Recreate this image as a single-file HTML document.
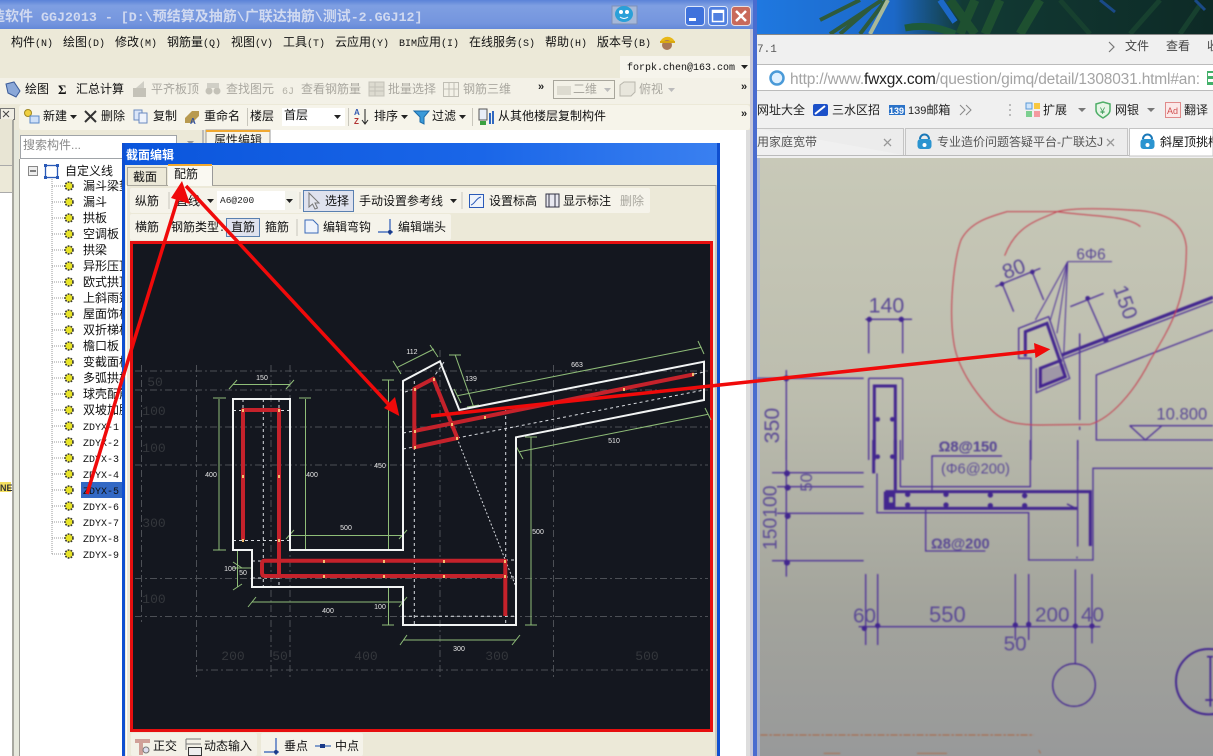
<!DOCTYPE html>
<html><head><meta charset="utf-8"><title>GGJ2013</title>
<style>
html,body{margin:0;padding:0;width:1213px;height:756px;overflow:hidden;background:#fff}
svg{display:block;font-family:"Liberation Sans","Noto Sans CJK SC",sans-serif;font-size:12px}
.l{font-family:"Liberation Mono",monospace;font-size:10px}
.g{fill:#a9a79f}
.t{font-family:"Liberation Mono","Noto Sans CJK SC",monospace;font-size:11px;fill:#111}
.gl{stroke:#4c4f55;stroke-width:1;stroke-dasharray:7 3 2 3;fill:none}
.wd{stroke:#d8dbe0;stroke-width:1;stroke-dasharray:3 3;fill:none}
.dim{stroke:#8fbd78;stroke-width:1;fill:none}
.dt{fill:#e8e8e8;font-family:"Liberation Sans",sans-serif;font-size:7px;text-anchor:middle}
.lb{fill:#34373c;font-family:"Liberation Mono",monospace;font-size:13px;text-anchor:middle}
.rb{stroke:#c5222b;stroke-width:4;fill:none;stroke-linejoin:round}
.p{fill:none;stroke:#4d3197;stroke-width:4}
.pb{fill:none;stroke:#43258f;stroke-width:9}
.pt{fill:#5a4a94;font-family:"Liberation Sans",sans-serif}
</style></head><body>
<svg width="1213" height="756" viewBox="0 0 1213 756" xmlns="http://www.w3.org/2000/svg">
<defs>
<linearGradient id="tb" x1="0" y1="0" x2="0" y2="1"><stop offset="0" stop-color="#5b82d8"/><stop offset=".2" stop-color="#7f9fe2"/><stop offset=".8" stop-color="#7495de"/><stop offset="1" stop-color="#6488d8"/></linearGradient>
<linearGradient id="dt" x1="0" y1="0" x2="1" y2="0"><stop offset="0" stop-color="#0a55dc"/><stop offset=".6" stop-color="#1a66e8"/><stop offset="1" stop-color="#3a80f0"/></linearGradient>
<linearGradient id="ph" x1="0" y1="0" x2="0" y2="1"><stop offset="0" stop-color="#c8c9b8"/><stop offset=".4" stop-color="#bcbdae"/><stop offset=".75" stop-color="#a3a49c"/><stop offset="1" stop-color="#98999a"/></linearGradient>
<linearGradient id="wall" x1="0" y1="0" x2="1" y2="0"><stop offset="0" stop-color="#1f78e0"/><stop offset=".3" stop-color="#1c68c8"/><stop offset=".45" stop-color="#123a34"/><stop offset="1" stop-color="#0d2a26"/></linearGradient>
<filter id="bl" x="-5%" y="-5%" width="110%" height="110%"><feGaussianBlur stdDeviation="0.7"/></filter>
</defs>

<!-- wallpaper -->
<rect x="757" y="0" width="456" height="35" fill="url(#wall)"/>
<g stroke-width="5" fill="none">
<path d="M830,34L882,0M860,34L886,0M820,20L860,0M840,34L870,8" stroke="#2e5a3c" stroke-width="4"/>
<path d="M870,34L888,0" stroke="#a8b898" stroke-width="4"/>
<path d="M905,28C925,24 940,28 955,34" stroke="#1e5a38" stroke-width="7"/>
<path d="M950,0L975,34M975,0L960,34M1000,0L985,34M1040,0L1020,34" stroke="#1e5030" stroke-width="9"/>
<path d="M940,0L955,22" stroke="#1c68c8" stroke-width="6"/>
<path d="M1060,0L1090,34M1130,34L1160,0M1180,34L1200,5" stroke="#17402f" stroke-width="5"/>
<path d="M1100,0L1115,12M1195,0L1205,10" stroke="#1a4a88" stroke-width="3"/>
</g>

<!-- browser chrome -->
<rect x="757" y="34" width="456" height="124" fill="#f0f0f0"/>
<rect x="757" y="34" width="456" height="1" fill="#888"/>
<text x="757" y="52" fill="#555" class="l" style="font-size:11px">7.1</text>
<path d="M1109,42l5,5l-5,5" fill="none" stroke="#777" stroke-width="1.2"/>
<text x="1125" y="50" fill="#444">文件</text><text x="1166" y="50" fill="#444">查看</text><text x="1207" y="50" fill="#444">收</text>
<rect x="757" y="65" width="456" height="26" fill="#fff"/>
<path d="M757,64.500H1213M757,90.500H1213" stroke="#bbb"/>
<circle cx="777" cy="78" r="6.500" fill="#dff0ff" stroke="#4a9ad8" stroke-width="2.500"/>
<text x="790" y="84" font-size="15.500" fill="#a4a4a4" textLength="410" font-family="Liberation Sans,sans-serif">http://www.<tspan fill="#222">fwxgx.com</tspan>/question/gimq/detail/1308031.html#an:</text>
<rect x="1207" y="71" width="6" height="14" fill="#43b06a"/><rect x="1208" y="73" width="5" height="3" fill="#fff"/><rect x="1208" y="79" width="5" height="3" fill="#fff"/>
<text x="757" y="114" fill="#222">网址大全</text>
<rect x="813" y="104" width="15" height="12" rx="2" fill="#1c50c8"/><path d="M815,114l10,-8" stroke="#fff" stroke-width="2"/>
<text x="832" y="114" fill="#222">三水区招</text>
<rect x="889" y="105" width="16" height="10" fill="#2a72c8"/><text x="889" y="114" fill="#fff" font-size="9" font-weight="bold">139</text>
<text x="908" y="114" fill="#222" font-size="12"><tspan font-size="11">139</tspan>邮箱</text>
<path d="M960,105l5,5l-5,5M966,105l5,5l-5,5" fill="none" stroke="#888"/>
<path d="M1010,104v2m0,3v2m0,3v2" stroke="#bbb" stroke-width="2"/>
<rect x="1026" y="103" width="6" height="6" fill="#cfe4fa" stroke="#5a9ad8"/><rect x="1034" y="103" width="6" height="6" fill="#f8c840"/><rect x="1026" y="111" width="6" height="6" fill="#7ccf90"/><rect x="1034" y="111" width="6" height="6" fill="#f49aa0"/>
<text x="1043" y="114" fill="#222">扩展</text><path d="M1078,108h8l-4,4z" fill="#777"/>
<path d="M1096,104l7,-2l7,2v6c0,4 -4,6 -7,8c-3,-2 -7,-4 -7,-8z" fill="#e6f5e6" stroke="#4fae68" stroke-width="1.500"/><text x="1100" y="114" font-size="9" fill="#3a9a58">¥</text>
<text x="1115" y="114" fill="#222">网银</text><path d="M1147,108h8l-4,4z" fill="#777"/>
<rect x="1165.500" y="102.500" width="15" height="15" fill="#fbe8e8" stroke="#e08a8a"/><text x="1167" y="114" font-size="9" fill="#d05050">Ad</text>
<text x="1184" y="114" fill="#222">翻译</text>
<!-- tabs -->
<rect x="757" y="128" width="456" height="30" fill="#f0f0f0"/>
<path d="M757,128.500H903.500V155M905.500,155V128.500H1127.500V155" fill="#ececec" stroke="#c4c4c4"/>
<path d="M1129.500,156V128.500H1213V156z" fill="#fff" stroke="#c4c4c4"/>
<path d="M757,155.500H1129" stroke="#bbb"/>
<text x="757" y="146" fill="#555">用家庭宽带</text>
<path d="M884,139l7,7m0,-7l-7,7M1107,139l7,7m0,-7l-7,7" stroke="#999" stroke-width="1.300"/>
<g id="ic1"><path d="M920,139a4.500,4.500 0 0 1 9,0" fill="none" stroke="#1a78b8" stroke-width="2"/><rect x="917.500" y="139" width="14" height="10" rx="3" fill="#2a94d0"/><circle cx="924.500" cy="145" r="2" fill="#fff"/></g>
<text x="937" y="146" fill="#555">专业造价问题答疑平台-广联达J</text>
<path d="M1143,139a4.500,4.500 0 0 1 9,0" fill="none" stroke="#1a78b8" stroke-width="2"/><rect x="1140.500" y="139" width="14" height="10" rx="3" fill="#2a94d0"/><circle cx="1147.500" cy="145" r="2" fill="#fff"/>
<text x="1160" y="146" fill="#111">斜屋顶挑槽</text>

<!-- photo -->
<rect x="757" y="158" width="456" height="598" fill="url(#ph)"/>
<rect x="757" y="158" width="3" height="598" fill="#a9b6e0" opacity=".7"/>
<g filter="url(#bl)">
<g transform="translate(757,160) scale(.33333)">
<path class="p" d="M335,580V480M437,580V480M325,478H465M335,655H437"/>
<circle cx="337" cy="478" r="8" fill="#43258f"/><circle cx="433" cy="478" r="8" fill="#43258f"/>
<text class="pt" x="335" y="458" font-size="64">140</text>
<path class="p" d="M88,630V900M0,655H320"/>
<circle cx="88" cy="655" r="9" fill="#43258f"/>
<text class="pt" transform="translate(66,850) rotate(-90)" font-size="64">350</text>
<path class="p" d="M335,655V900M437,655V900"/>
<path class="pb" d="M352,900V678H415V900"/><circle cx="362" cy="778" r="7" fill="#43258f"/><circle cx="406" cy="778" r="7" fill="#43258f"/><circle cx="362" cy="890" r="7" fill="#43258f"/><circle cx="406" cy="890" r="7" fill="#43258f"/>
<text class="pt" x="545" y="875" font-size="44" font-weight="bold">Ω8@150</text>
<path class="p" d="M525,888H735"/>
<path class="p" d="M822,900V595H785V505L875,470L938,655L838,698V625"/>
<path class="pb" d="M805,590V515L870,490L925,650L850,680V625L915,600"/>
<path d="M850,630L925,610L925,650L850,680Z" fill="#43258f" opacity=".25"/>
<path d="M932,305L835,480M932,305L880,480M932,305L900,520M932,305L920,590M932,305H1065" fill="none" stroke="#4d3197" stroke-width="3"/>
<text class="pt" x="958" y="298" font-size="46">6Φ6</text>
<path class="p" d="M715,380L850,325M735,370L770,455M825,335L860,420"/>
<circle cx="735" cy="372" r="7" fill="#43258f"/><circle cx="826" cy="336" r="7" fill="#43258f"/>
<text class="pt" transform="translate(745,358) rotate(-20)" font-size="62">80</text>
<path class="p" d="M940,440L1040,400M990,415L1045,540"/>
<circle cx="992" cy="415" r="7" fill="#43258f"/><circle cx="1046" cy="540" r="8" fill="#43258f"/>
<text class="pt" transform="translate(1068,385) rotate(70)" font-size="62">150</text>
<path d="M915,585L1368,412" fill="none" stroke="#43258f" stroke-width="10"/>
<path d="M920,595L1368,425" fill="none" stroke="#4d3197" stroke-width="4"/>
<path class="p" d="M968,520V780M968,800v10M962,840V900"/>
<path class="p" d="M1368,510L1018,645V840H1368"/>
<text class="pt" x="1198" y="778" font-size="50">10.800</text>
<path class="p" d="M1118,797H1368M1118,797L1165,840L1215,797"/>
<path d="M1150,200C1110,165 1000,170 900,155L750,155C700,170 640,185 612,240C590,300 575,450 590,545C600,620 650,690 690,735C730,785 770,795 850,795L1000,793C1060,775 1130,700 1180,600C1240,500 1290,420 1288,260C1280,190 1230,160 1150,152C1050,145 950,142 900,155C850,180 780,190 743,287" fill="none" stroke="#c5384a" stroke-width="3"/>
</g>
<g transform="translate(757,440) scale(.33333)">
<path class="pb" d="M350,0V100M415,0V150"/>
<path class="p" d="M88,0V410M45,98H320M60,140H320M60,220H320M45,362H320M360,100V218H815V360H1008V85H1368"/>
<circle cx="90" cy="100" r="9" fill="#43258f"/><circle cx="92" cy="143" r="9" fill="#43258f"/><circle cx="92" cy="228" r="9" fill="#43258f"/><circle cx="90" cy="368" r="9" fill="#43258f"/>
<text class="pt" transform="translate(165,155) rotate(-90)" font-size="50">50</text>
<text class="pt" transform="translate(58,330) rotate(-90)" font-size="58">150100</text>
<text class="pt" x="545" y="35" font-size="44" font-weight="bold">Ω8@150</text>
<path class="p" d="M525,150V48H735M430,0V140H820V0M962,0V320M960,350v5"/>
<text class="pt" x="552" y="100" font-size="44">(Φ6@200)</text>
<path class="pb" d="M385,155H1000V318M385,155V205H960"/>
<rect x="385" y="158" width="30" height="45" fill="#43258f"/><rect x="397" y="172" width="10" height="15" fill="#a9aa9f"/>
<path d="M930,192l30,15" stroke="#43258f" stroke-width="4"/>
<g fill="#43258f"><circle cx="452" cy="163" r="8"/><circle cx="567" cy="163" r="8"/><circle cx="700" cy="165" r="8"/><circle cx="803" cy="167" r="8"/><circle cx="452" cy="195" r="8"/><circle cx="567" cy="195" r="8"/><circle cx="700" cy="197" r="8"/><circle cx="803" cy="197" r="8"/></g>
<path class="p" d="M506,205V333H685"/>
<text class="pt" x="522" y="325" font-size="44" font-weight="bold">Ω8@200</text>
<path class="p" d="M326,402V615M362,402V615M775,402V600M815,402V600M955,388V670M1005,402V610M305,560H1030"/>
<g fill="#43258f"><circle cx="322" cy="565" r="8"/><circle cx="362" cy="557" r="8"/><circle cx="775" cy="555" r="8"/><circle cx="815" cy="553" r="8"/><circle cx="955" cy="558" r="8"/><circle cx="1005" cy="558" r="8"/></g>
<text class="pt" x="288" y="548" font-size="62">60</text><text class="pt" x="516" y="546" font-size="66">550</text><text class="pt" x="834" y="544" font-size="62">200</text><text class="pt" x="972" y="544" font-size="62">40</text><text class="pt" x="740" y="632" font-size="62">50</text>
<circle cx="951" cy="735" r="64" fill="none" stroke="#43258f" stroke-width="4"/>
<circle cx="1355" cy="725" r="98" fill="none" stroke="#43258f" stroke-width="6"/>
<path d="M1350,650h18M1360,650v150M1345,780h23" stroke="#43258f" stroke-width="5" fill="none"/>
<path d="M10,885H830" stroke="#a86c50" stroke-width="4" stroke-dasharray="22 5 8 4" fill="none"/>
<path d="M845,930l6,10M200,940h50M480,940h90" stroke="#a86c50" stroke-width="3"/>
</g>
</g>

<!-- main window -->
<rect x="0" y="0" width="757" height="756" fill="#ece9d8"/>
<rect x="0" y="0" width="755" height="29" fill="url(#tb)"/>
<rect x="753" y="0" width="4" height="756" fill="#4a6ccf"/>
<rect x="750" y="29" width="3" height="727" fill="#c6c6d8"/>
<text x="-9" y="21" fill="#d0d9f0" font-size="14" font-weight="bold" font-family="Liberation Mono,Noto Sans CJK SC,monospace">造软件<tspan font-size="13.300" dx="8">GGJ2013 - [D:\</tspan>预结算及抽筋<tspan font-size="13.300">\</tspan>广联达抽筋<tspan font-size="13.300">\</tspan>测试<tspan font-size="13.300">-2.GGJ12]</tspan></text>
<rect x="612" y="6" width="25" height="18" fill="#a6b8d8" stroke="#7d90b8"/>
<ellipse cx="624" cy="14" rx="9" ry="8" fill="#2aa0d8"/><circle cx="621" cy="12" r="2" fill="#fff"/><circle cx="627" cy="12" r="2" fill="#fff"/><path d="M620,17q4,3 8,0" stroke="#fff" fill="none"/>
<rect x="685.500" y="6.500" width="19" height="19" rx="3" fill="#3f72dc" stroke="#dfe8fa"/><rect x="689" y="18" width="7" height="3" fill="#fff"/>
<rect x="708.500" y="6.500" width="19" height="19" rx="3" fill="#4f7fe0" stroke="#dfe8fa"/><rect x="712.500" y="10.500" width="11" height="11" fill="none" stroke="#fff" stroke-width="1.500"/><rect x="712" y="10" width="12" height="3" fill="#fff"/>
<rect x="731.500" y="6.500" width="19" height="19" rx="3" fill="#c96a5a" stroke="#e8dfe0"/><path d="M736,11l10,10m0,-10l-10,10" stroke="#fff" stroke-width="2.500"/>

<!-- menu -->
<g fill="#111">
<text x="11" y="46">构件<tspan class="l">(N)</tspan></text><text x="63" y="46">绘图<tspan class="l">(D)</tspan></text><text x="115" y="46">修改<tspan class="l">(M)</tspan></text><text x="167" y="46">钢筋量<tspan class="l">(Q)</tspan></text><text x="231" y="46">视图<tspan class="l">(V)</tspan></text><text x="283" y="46">工具<tspan class="l">(T)</tspan></text><text x="335" y="46">云应用<tspan class="l">(Y)</tspan></text>
<text x="399" y="46"><tspan class="l">BIM</tspan>应用<tspan class="l">(I)</tspan></text><text x="469" y="46">在线服务<tspan class="l">(S)</tspan></text><text x="545" y="46">帮助<tspan class="l">(H)</tspan></text><text x="597" y="46">版本号<tspan class="l">(B)</tspan></text>
</g>
<path d="M660,42a8,8 0 0 1 15,0z" fill="#e8b818"/><circle cx="667" cy="45" r="5" fill="#a87858"/><rect x="660" y="41" width="15" height="2" fill="#d8a810"/>
<!-- account row -->
<rect x="620" y="56" width="130" height="22" fill="#f6f4ec"/>
<text x="627" y="70" class="t" style="font-size:10px">forpk.chen@163.com</text><path d="M741,65h7l-3.500,4z" fill="#222"/>
<!-- toolbar 1 -->
<rect x="0" y="78" width="750" height="26" fill="#f3f1e7"/>
<path d="M6,84l8,-2l6,9l-4,6l-8,-4z" fill="#8ba8d8" stroke="#3a5a98"/>
<text x="25" y="93" fill="#111">绘图</text><text x="58" y="94" font-size="13" font-weight="bold" font-family="Liberation Serif,serif" fill="#111">Σ</text><text x="76" y="93" fill="#111">汇总计算</text>
<rect x="133" y="88" width="13" height="9" fill="#c4c2b8"/><path d="M136,88l8,-7v7" fill="#d0cfc6"/>
<text x="151" y="93" class="g">平齐板顶</text>
<circle cx="209" cy="91" r="3.500" fill="#c4c2b8"/><circle cx="217" cy="91" r="3.500" fill="#c4c2b8"/><rect x="207" y="83" width="12" height="5" fill="#d0cfc6"/>
<text x="226" y="93" class="g">查找图元</text>
<text x="282" y="94" font-size="10" fill="#b4b2a8" font-family="Liberation Mono,monospace">6J</text>
<text x="301" y="93" class="g">查看钢筋量</text>
<rect x="369" y="82" width="15" height="14" fill="#dddbd0" stroke="#c4c2b8"/><path d="M369,87h15M369,91h15M375,82v14" stroke="#c4c2b8"/>
<text x="388" y="93" class="g">批量选择</text>
<rect x="443.500" y="82.500" width="15" height="14" fill="none" stroke="#c0beb4"/><path d="M449,82v14M454,82v14M443,89h15" stroke="#c0beb4"/>
<text x="463" y="93" class="g">钢筋三维</text>
<text x="538" y="90" font-size="11" font-weight="bold" fill="#222">»</text>
<rect x="553.500" y="80.500" width="61" height="18" fill="#f3f1e7" stroke="#a8a69c"/><rect x="557" y="86" width="14" height="9" fill="#dddbd0"/><text x="573" y="93" class="g">二维</text><path d="M604,88h7l-3.500,4z" fill="#bbb"/>
<path d="M620,85l4,-3h11v10l-4,4h-11z" fill="#e8e6dc" stroke="#b8b6ac"/><text x="639" y="93" class="g">俯视</text><path d="M668,88h7l-3.500,4z" fill="#bbb"/>
<text x="741" y="90" font-size="11" font-weight="bold" fill="#222">»</text>
<!-- toolbar 2 -->
<rect x="0" y="104" width="750" height="26" fill="#ece9d8"/>
<rect x="19" y="105" width="731" height="25" rx="3" fill="#f6f4ea"/>
<rect x="0.500" y="108.500" width="14" height="11" fill="#f0eee4" stroke="#777"/><path d="M3,111l6,6m0,-6l-6,6" stroke="#444"/>
<circle cx="28" cy="113" r="3.500" fill="#f0d040" stroke="#a08820"/><rect x="30" y="116" width="9" height="7" fill="#cfe0f8" stroke="#5a88c8"/>
<text x="43" y="120" fill="#111">新建</text><path d="M70,115h7l-3.500,4z" fill="#222"/>
<path d="M85,111l11,11m0,-11l-11,11" stroke="#333" stroke-width="2"/><text x="101" y="120" fill="#111">删除</text>
<rect x="134" y="110" width="8" height="10" fill="#dbe6f8" stroke="#6a8ac0"/><rect x="139" y="113" width="8" height="10" fill="#eef3fc" stroke="#6a8ac0"/>
<text x="153" y="120" fill="#111">复制</text>
<path d="M185,118l7,-7l7,0v5l-7,7h-7z" fill="#b89a50"/><text x="190" y="124" font-size="8" font-weight="bold" fill="#3050a0">A</text>
<text x="204" y="120" fill="#111">重命名</text><path d="M247.500,108v18" stroke="#c8c6bc"/>
<text x="250" y="120" fill="#111">楼层</text>
<rect x="282" y="108" width="63" height="18" fill="#fff"/><text x="284" y="119" fill="#111">首层</text><path d="M334,115h7l-3.500,4z" fill="#222"/>
<path d="M348.500,108v18" stroke="#c8c6bc"/>
<text x="354" y="115" font-size="8" font-weight="bold" fill="#3058b0">A</text><text x="354" y="124" font-size="8" font-weight="bold" fill="#b03030">Z</text><path d="M365,109v14m-3,-3l3,4l3,-4" stroke="#222" fill="none"/>
<text x="374" y="120" fill="#111">排序</text><path d="M401,115h7l-3.500,4z" fill="#222"/>
<path d="M414,111h15l-5,6v7l-4,-2v-5z" fill="#3a9ad8" stroke="#1a6aa8"/>
<text x="432" y="120" fill="#111">过滤</text><path d="M459,115h7l-3.500,4z" fill="#222"/><path d="M472.500,108v18" stroke="#c8c6bc"/>
<rect x="479" y="109" width="8" height="11" fill="#e8eef8" stroke="#555"/><path d="M480,121h6v4h-6z" fill="#3aa040"/><path d="M490,113v11M493,111v13" stroke="#3068c0" stroke-width="2"/>
<text x="498" y="120" fill="#111">从其他楼层复制构件</text>
<text x="741" y="117" font-size="11" font-weight="bold" fill="#222">»</text>

<!-- left panes -->
<rect x="0" y="119" width="13" height="46" fill="#e8e5d4"/>
<rect x="0" y="193" width="13" height="563" fill="#fff"/>
<path d="M0,165.500H13M0,192.500H13" stroke="#aaa"/>
<rect x="12" y="120" width="2" height="636" fill="#a8a8a0"/>
<rect x="14" y="130" width="5" height="626" fill="#e6e8dc"/>
<rect x="19" y="159" width="103" height="597" fill="#fff"/>
<rect x="19" y="159" width="1" height="597" fill="#9a9a94"/>
<rect x="0" y="482" width="11" height="10" fill="#f4e060"/><text x="0" y="491" font-size="9" font-weight="bold" fill="#333">NE</text>
<rect x="20.500" y="135.500" width="156" height="23" fill="#fff" stroke="#a0a4a8"/>
<text x="23" y="149" fill="#8a8a8a">搜索构件...</text>
<path d="M187,141h7l-3.500,4z" fill="#999"/>
<rect x="202" y="130" width="2" height="15" fill="#bbb"/>
<!-- props -->
<rect x="270" y="130" width="480" height="626" fill="#fff"/>
<rect x="206" y="130" width="64" height="14" fill="#f6f4ea" stroke="#999"/><rect x="206" y="130" width="64" height="2" fill="#f0a830"/>
<text x="214" y="144" fill="#222">属性编辑</text>
<rect x="719" y="143" width="27" height="613" fill="#fff"/>
<rect x="746" y="130" width="4" height="626" fill="#ddd"/>
<!-- tree -->
<rect x="28.500" y="166.500" width="9" height="9" fill="#eee" stroke="#888"/><path d="M30,171h6" stroke="#111"/>
<rect x="45.500" y="165.500" width="12" height="12" fill="none" stroke="#2a5ab8" stroke-width="1.300"/>
<g fill="#2a5ab8"><rect x="44" y="164" width="3" height="3"/><rect x="56" y="164" width="3" height="3"/><rect x="44" y="176" width="3" height="3"/><rect x="56" y="176" width="3" height="3"/></g>
<text x="65" y="175" fill="#111">自定义线</text>
<path d="M52,179V554" stroke="#999" stroke-dasharray="1 1"/>
<g stroke="#999" stroke-dasharray="1 1"><path d="M52,186H64M52,202H64M52,218H64M52,234H64M52,250H64M52,266H64M52,282H64M52,298H64M52,314H64M52,330H64M52,346H64M52,362H64M52,378H64M52,394H64M52,410H64M52,426H64M52,442H64M52,458H64M52,474H64M52,490H64M52,506H64M52,522H64M52,538H64M52,554H64"/></g>
<g fill="#e8e428" stroke="#333" stroke-width="1.600" stroke-dasharray="1.700 1.200">
<circle cx="69" cy="186" r="4"/><circle cx="69" cy="202" r="4"/><circle cx="69" cy="218" r="4"/><circle cx="69" cy="234" r="4"/><circle cx="69" cy="250" r="4"/><circle cx="69" cy="266" r="4"/><circle cx="69" cy="282" r="4"/><circle cx="69" cy="298" r="4"/><circle cx="69" cy="314" r="4"/><circle cx="69" cy="330" r="4"/><circle cx="69" cy="346" r="4"/><circle cx="69" cy="362" r="4"/><circle cx="69" cy="378" r="4"/><circle cx="69" cy="394" r="4"/><circle cx="69" cy="410" r="4"/><circle cx="69" cy="426" r="4"/><circle cx="69" cy="442" r="4"/><circle cx="69" cy="458" r="4"/><circle cx="69" cy="474" r="4"/><circle cx="69" cy="490" r="4"/><circle cx="69" cy="506" r="4"/><circle cx="69" cy="522" r="4"/><circle cx="69" cy="538" r="4"/><circle cx="69" cy="554" r="4"/>
</g>
<rect x="81" y="482" width="41" height="16" fill="#3268c4"/>
<g fill="#111">
<text x="83" y="190">漏斗梁垫</text><text x="83" y="206">漏斗</text><text x="83" y="222">拱板</text><text x="83" y="238">空调板</text><text x="83" y="254">拱梁</text><text x="83" y="270">异形压顶</text><text x="83" y="286">欧式拱顶</text><text x="83" y="302">上斜雨篷</text><text x="83" y="318">屋面饰板</text><text x="83" y="334">双折梯板</text><text x="83" y="350">檐口板</text><text x="83" y="366">变截面板</text><text x="83" y="382">多弧拱板</text><text x="83" y="398">球壳配筋</text><text x="83" y="414">双坡加腋</text>
</g>
<g fill="#111">
<text x="83" y="430" class="t" style="font-size:10px">ZDYX-1</text><text x="83" y="446" class="t" style="font-size:10px">ZDYX-2</text><text x="83" y="462" class="t" style="font-size:10px">ZDYX-3</text><text x="83" y="478" class="t" style="font-size:10px">ZDYX-4</text><text x="83" y="494" class="t" style="font-size:10px">ZDYX-5</text><text x="83" y="510" class="t" style="font-size:10px">ZDYX-6</text><text x="83" y="526" class="t" style="font-size:10px">ZDYX-7</text><text x="83" y="542" class="t" style="font-size:10px">ZDYX-8</text><text x="83" y="558" class="t" style="font-size:10px">ZDYX-9</text>
</g>

<!-- dialog -->
<rect x="122" y="143" width="598" height="613" fill="#ece9d8"/>
<rect x="122" y="143" width="598" height="22" fill="url(#dt)"/>
<rect x="122" y="143" width="3" height="613" fill="#0f4fd0"/>
<rect x="717" y="143" width="3" height="613" fill="#0f4fd0"/>
<text x="126" y="159" fill="#fff" font-weight="bold" font-size="12">截面编辑</text>
<rect x="127.500" y="167.500" width="39" height="18" fill="#ece9d8" stroke="#a8a69c"/>
<text x="133" y="181" fill="#111">截面</text>
<path d="M126,185.500H716V756" fill="none" stroke="#a8a69c"/><path d="M126.500,185V756" stroke="#fff"/>
<rect x="168" y="165" width="44" height="21" fill="#faf9f2"/><rect x="168" y="164" width="44" height="2" fill="#f0a830"/><path d="M212.500,166V185" stroke="#999"/>
<text x="174" y="178" fill="#111">配筋</text>
<!-- dialog row 1 -->
<rect x="130" y="188" width="520" height="25" rx="2" fill="#f5f3ea"/>
<text x="135" y="205" fill="#111">纵筋</text><path d="M169,192v17" stroke="#c8c6bc"/>
<text x="176" y="205" fill="#111">直线</text><path d="M207,199h7l-3.500,4z" fill="#222"/>
<rect x="217" y="191" width="68" height="19" fill="#fff"/><text x="220" y="203" class="l" fill="#222" style="font-size:9.500px">A6@200</text><rect x="285" y="191" width="12" height="19" fill="#f2f2ea"/><path d="M286,199h7l-3.500,4z" fill="#222"/>
<path d="M300,192v17" stroke="#c8c6bc"/>
<rect x="303.500" y="190.500" width="50" height="21" fill="#dfe2ee" stroke="#5a80b0"/>
<path d="M309,193v14l3.500,-3l2.500,5l2.500,-1l-2.500,-5h4z" fill="#e4e6ee" stroke="#777"/>
<text x="325" y="205" fill="#111">选择</text>
<text x="359" y="205" fill="#111">手动设置参考线</text><path d="M450,199h7l-3.500,4z" fill="#222"/><path d="M462,192v17" stroke="#c8c6bc"/>
<rect x="469.500" y="194.500" width="14" height="13" fill="#eef3fb" stroke="#2a5ab8"/><path d="M471,205c4,-1 5,-7 10,-8" stroke="#2a5ab8" fill="none"/>
<text x="489" y="205" fill="#111">设置标高</text>
<rect x="546" y="194" width="13" height="13" fill="#e8e8f0" stroke="#334"/><path d="M549,194v13M555,194v13" stroke="#334"/>
<text x="563" y="205" fill="#111">显示标注</text><text x="620" y="205" class="g">删除</text>
<!-- dialog row 2 -->
<rect x="130" y="214" width="321" height="26" rx="2" fill="#f5f3ea"/>
<text x="135" y="231" fill="#111">横筋</text><text x="171" y="231" fill="#111">钢筋类型<tspan class="l">:</tspan></text>
<rect x="226.500" y="218.500" width="33" height="18" fill="#dfe2ee" stroke="#5a80b0"/><text x="231" y="231" fill="#111">直筋</text>
<text x="265" y="231" fill="#111">箍筋</text><path d="M297,219v17" stroke="#c8c6bc"/>
<path d="M305,220h8l5,5v8h-13z" fill="#eef3fb" stroke="#3a6ab8"/>
<text x="323" y="231" fill="#111">编辑弯钩</text>
<path d="M378,232h15M390,219v16" stroke="#2a5ab8" stroke-width="1.200"/><circle cx="390" cy="232" r="2" fill="#1a3a88"/>
<text x="398" y="231" fill="#111">编辑端头</text>

<!-- CAD canvas -->
<rect x="130" y="241" width="583" height="491" fill="#e60f0f"/>
<rect x="133" y="244" width="577" height="485" fill="#14171f"/>
<g class="gl">
<path d="M135,371H708M135,390H708M135,427H708M135,465H708M135,578.500H708M135,616.500H708M196,670H708"/>
<path d="M141.500,365V622M196.500,365V680M271,365V680M290,365V680M440,350V680M553.500,365V680"/>
</g>
<g class="lb">
<text x="155" y="386">50</text><text x="154" y="415">100</text><text x="154" y="452">100</text><text x="154" y="527">300</text><text x="154" y="603">100</text>
<text x="233" y="660">200</text><text x="280" y="660">50</text><text x="366" y="660">400</text><text x="497" y="660">300</text><text x="647" y="660">500</text>
</g>
<!-- white dashed -->
<g class="wd">
<path d="M263.300,399V587M279,399V410M233,410.500H290M233,540.500H290M243,399V410M252,561H262M252,578H281M279,540V587"/>
<path d="M414.300,381V625M505.700,410V625M403,616.300H516M403,449L414,447M403,433L414,431M405,392L414,389"/>
<path d="M457,438L704,390M444,362L433,378"/>
<path d="M457,438L516,587" stroke-dasharray="2 2"/>
<path d="M505,560H516M505,577H516M694,374L704,372"/>
</g>
<!-- green dims -->
<g class="dim">
<path d="M233,384.500H290M229,389l8,-9M286,389l8,-9"/>
<path d="M219,399V550M213,398H226M213,550H226"/>
<path d="M305.500,399V550M299,398H311M299,550H311"/>
<path d="M290,535.500H403M286,539l8,-9M399,539l8,-9"/>
<path d="M388.500,380V550M382,380H394M382,550H394"/>
<path d="M237.500,550V586.700M233,562l9,6M233,590l9,-6M233,568H252"/>
<path d="M252,602H403.300M248,607l8,-10M399,607l8,-10"/>
<path d="M388.500,586.700V625M382,587H394M382,625H394"/>
<path d="M403.300,640H516M400,645l7,-10M512,645l8,-10"/>
<path d="M396.700,367.700L434,349M393,361l8,13M430,345l8,12"/>
<path d="M455.300,355.300L473.300,406M449,355l12,0M467,407l12,-2"/>
<path d="M457.300,395.700L701.700,347.300M454,389l7,14M698,341l6,13"/>
<path d="M519.300,451.700L708.300,414.300M516,446l7,13M705,408l6,12"/>
<path d="M531,437.300V624.700M525,437H537M525,625H537"/>
</g>
<!-- white outline -->
<path d="M233,399H290V550H403V381L440,361.300L459.300,410L704,361.700V400L516,437.300V625H403V587H252V550H233Z" fill="none" stroke="#f2f4f4" stroke-width="2"/>
<!-- rebar -->
<g class="rb">
<path d="M243,540V410H279V576"/>
<path d="M505.300,616V560.700H264Q262,561 262,564V573Q262,576 265,576H505"/>
<path d="M414.300,447.300V388.700L433.300,378.700L457.300,438Z"/>
<path d="M414.300,431L694,374.300"/>
</g>
<!-- ticks -->
<g fill="#f4c070">
<rect x="242" y="409" width="2" height="3"/><rect x="278" y="409" width="2" height="3"/><rect x="242" y="475" width="2" height="3"/><rect x="278" y="475" width="2" height="3"/><rect x="242" y="539" width="2" height="3"/><rect x="278" y="539" width="2" height="3"/>
<rect x="323" y="560" width="2" height="3"/><rect x="383" y="560" width="2" height="3"/><rect x="443" y="560" width="2" height="3"/><rect x="504" y="560" width="2" height="3"/><rect x="323" y="575" width="2" height="3"/><rect x="383" y="575" width="2" height="3"/><rect x="443" y="575" width="2" height="3"/><rect x="504" y="575" width="2" height="3"/>
<rect x="414" y="388" width="2" height="3"/><rect x="433" y="378" width="2" height="3"/><rect x="456" y="437" width="2" height="3"/><rect x="414" y="446" width="2" height="3"/><rect x="414" y="430" width="2" height="3"/><rect x="451" y="423" width="2" height="3"/><rect x="484" y="416" width="2" height="3"/><rect x="623" y="388" width="2" height="3"/><rect x="692" y="373" width="2" height="3"/>
</g>
<!-- dim text -->
<g class="dt">
<text x="262" y="380">150</text><text x="211" y="477">400</text><text x="312" y="477">400</text><text x="346" y="530">500</text><text x="380" y="468">450</text><text x="230" y="571">100</text><text x="243" y="575">50</text><text x="328" y="613">400</text><text x="380" y="609">100</text><text x="459" y="651">300</text><text x="412" y="354">112</text><text x="471" y="381">139</text><text x="577" y="367">663</text><text x="614" y="443">510</text><text x="538" y="534">500</text>
</g>

<!-- dialog bottom toolbars -->
<rect x="131" y="733" width="126" height="23" rx="2" fill="#f3f1e7"/>
<rect x="261" y="733" width="102" height="23" rx="2" fill="#f5f3ea"/>
<path d="M135,741H150M141,741V755" stroke="#d0a098" stroke-width="4" fill="none"/><circle cx="146" cy="750" r="3" fill="#dde" stroke="#777"/>
<text x="153" y="750" fill="#111">正交</text>
<path d="M186,739H201M186,744H201M186,739V750" stroke="#777" fill="none"/><rect x="188.500" y="747.500" width="13" height="8" fill="#eee" stroke="#333"/>
<text x="204" y="750" fill="#111">动态输入</text>
<path d="M264,752H279M276,738V755" stroke="#2a5ab8" stroke-width="1.200"/><circle cx="276" cy="752" r="2" fill="#1a3a88"/>
<text x="284" y="750" fill="#111">垂点</text>
<path d="M315,746H331" stroke="#5a80c0" stroke-width="1.500"/><rect x="320" y="744" width="5" height="4" fill="#1a3a88"/>
<text x="335" y="750" fill="#111">中点</text>

<!-- red annotation arrows -->
<g fill="none" stroke="#f00a0a" stroke-width="3.500">
<path d="M87,494L178,198"/>
<path d="M186,186L392,408"/>
<path d="M431,416L1036,351"/>
</g>
<g fill="#f00a0a">
<path d="M182,181L190,204L171,198Z"/>
<path d="M399.300,416L384,408L395,397Z"/>
<path d="M1050.300,349.300L1034,343L1035.500,358Z"/>
</g>
</svg>
</body></html>
